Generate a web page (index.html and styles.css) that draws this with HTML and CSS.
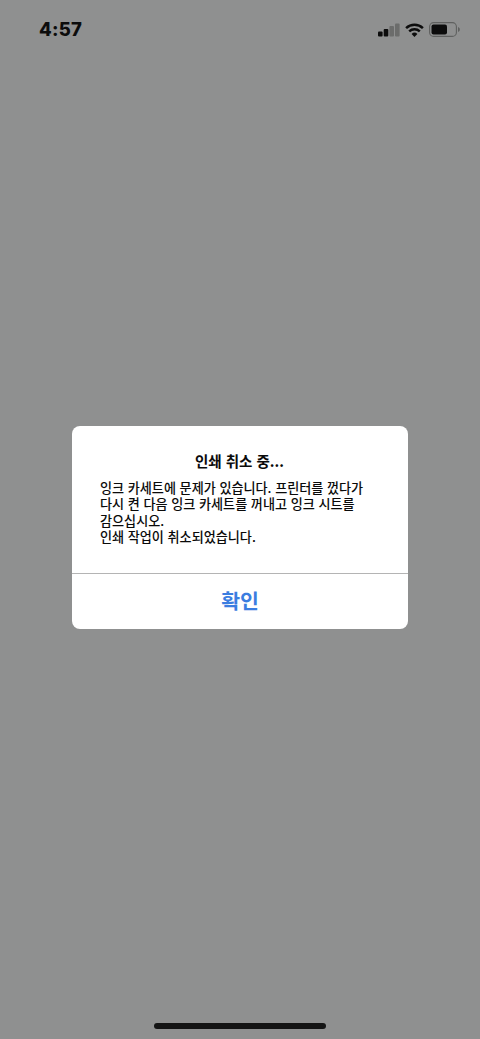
FILE: index.html
```html
<!DOCTYPE html>
<html lang="ko">
<head>
<meta charset="utf-8">
<title>인쇄 취소 중</title>
<link rel="stylesheet" href="styles.css">
</head>
<body>
<div class="screen">
  <header class="status">
    <span class="time">4:57</span>
    <div class="icons">
      <svg class="signal" width="22" height="14" viewBox="0 0 22 14">
        <rect x="0" y="8.5" width="4.6" height="5" rx="1" fill="#0c0c0c"/>
        <rect x="5.7" y="6" width="4.6" height="7.5" rx="1" fill="#0c0c0c"/>
        <rect x="11.4" y="3" width="4.6" height="10.5" rx="1" fill="#6b6c6b"/>
        <rect x="17" y="0.5" width="4.6" height="13" rx="1" fill="#6b6c6b"/>
      </svg>
      <svg class="wifi" width="19" height="14" viewBox="0 0 19 14">
        <path d="M1.1 5.2 A12.2 12.2 0 0 1 17.9 5.2" fill="none" stroke="#0c0c0c" stroke-width="2.5"/>
        <path d="M4.2 8.4 A7.8 7.8 0 0 1 14.8 8.4" fill="none" stroke="#0c0c0c" stroke-width="2.5"/>
        <path d="M9.5 14 L6.6 11 A4.1 4.1 0 0 1 12.4 11 Z" fill="#0c0c0c"/>
      </svg>
      <svg class="battery" width="31" height="15" viewBox="0 0 31 15">
        <rect x="0.6" y="0.6" width="26.8" height="13.8" rx="4" fill="none" stroke="#5f605f" stroke-width="1.1"/>
        <rect x="2.5" y="2.5" width="15.5" height="10" rx="2" fill="#0c0c0c"/>
        <path d="M29 5 C30.3 5.4 30.8 6.2 30.8 7.5 C30.8 8.8 30.3 9.6 29 10 Z" fill="#5f605f"/>
      </svg>
    </div>
  </header>
  <main class="center">
    <section class="dialog">
      <div class="content">
        <h1 class="title">인쇄 취소 중...</h1>
        <p class="message">잉크 카세트에 문제가 있습니다. 프린터를 껐다가<br>다시 켠 다음 잉크 카세트를 꺼내고 잉크 시트를<br>감으십시오.<br>인쇄 작업이 취소되었습니다.</p>
      </div>
      <div class="action">확인</div>
    </section>
  </main>
  <div class="home-row"><div class="home"></div></div>
</div>
</body>
</html>
```
FILE: styles.css
```css
html, body { margin: 0; padding: 0; }
body { width: 480px; height: 1039px; overflow: hidden; background: #8f9090; font-family: "Noto Sans CJK KR", "Noto Sans", sans-serif; }
.screen { width: 480px; height: 1039px; display: flex; flex-direction: column; }
.status { height: 50px; flex: none; display: flex; justify-content: space-between; align-items: flex-start; padding: 0 20px 0 39px; box-sizing: border-box; }
.time { font-family: Inter, "Liberation Sans", sans-serif; font-weight: 800; font-size: 18.5px; line-height: 23px; margin-top: 18px; color: #0c0c0c; letter-spacing: 0.2px; }
.icons { display: flex; align-items: center; gap: 5px; margin-top: 22px; }
.center { flex: none; height: 376px; position: relative; }
.dialog { position: absolute; left: 72px; top: 376px; width: 336px; height: 203px; background: #fff; border-radius: 8px; overflow: hidden; display: flex; flex-direction: column; }
.content { height: 148px; box-sizing: border-box; padding: 24px 28px 0; border-bottom: 1px solid #b4b4b4; }
.title { margin: 0 0 0 -1px; text-align: center; font-size: 14.5px; line-height: 21px; font-weight: 700; color: #0a0a0a; }
.message { margin: 9px 0 0; font-size: 13.1px; line-height: 16.4px; font-weight: 500; color: #0a0a0a; white-space: nowrap; }
.action { flex: 1; display: flex; align-items: center; justify-content: center; font-size: 20.5px; font-weight: 700; color: #3b7de0; padding-bottom: 4px; }
.home-row { margin-top: auto; height: 16px; flex: none; display: flex; justify-content: center; }
.home { width: 172px; height: 6px; border-radius: 3px; background: #141414; }
```
